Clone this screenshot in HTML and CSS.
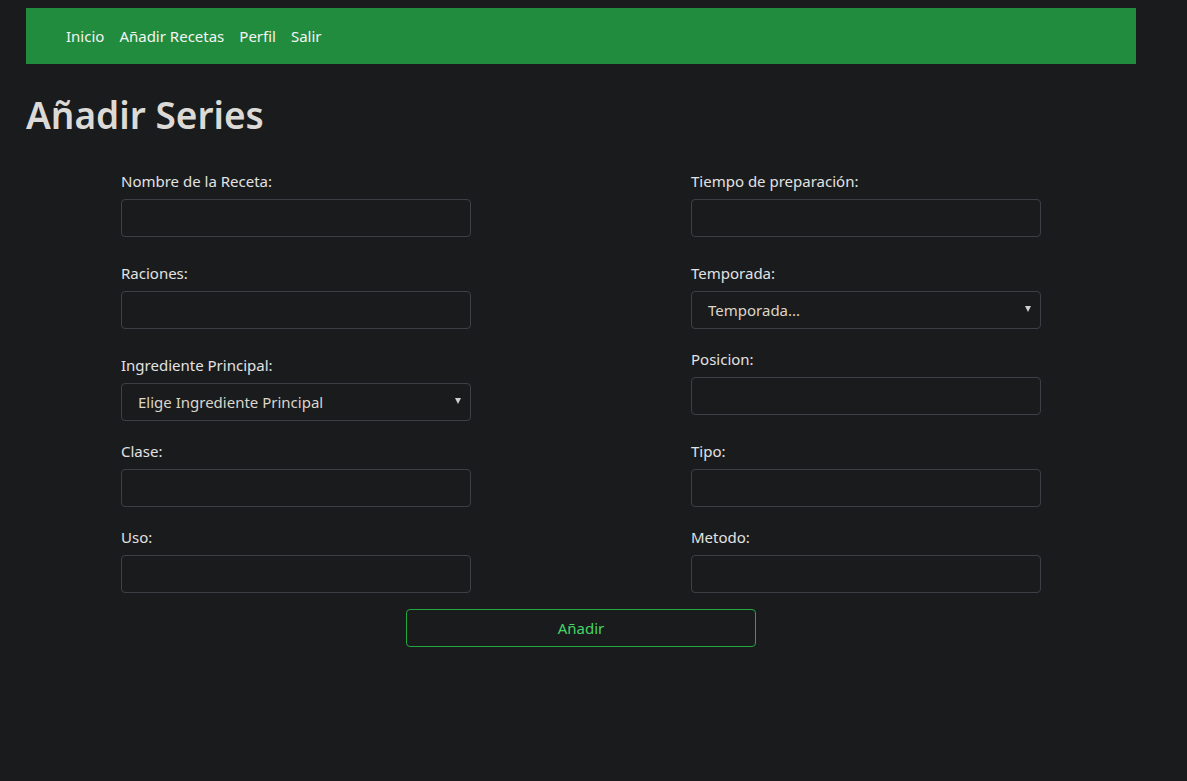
FILE: index.html
```html
<!DOCTYPE html>
<html lang="es">
<head>
<meta charset="utf-8">
<title>Añadir Series</title>
<link rel="stylesheet" href="styles.css">
</head>
<body>
<div class="container">
  <nav class="navbar">
    <a href="#" class="nav-link">Inicio</a>
    <a href="#" class="nav-link">Añadir Recetas</a>
    <a href="#" class="nav-link">Perfil</a>
    <a href="#" class="nav-link">Salir</a>
  </nav>
  <h1 class="title">Añadir Series</h1>
  <form class="form">
    <div class="cols">
      <div class="col">
        <div class="group gap-lg">
          <label class="label">Nombre de la Receta:</label>
          <input class="input" type="text">
        </div>
        <div class="group gap-lg">
          <label class="label">Raciones:</label>
          <input class="input" type="text">
        </div>
        <div class="group gap-sm">
          <label class="label">Ingrediente Principal:</label>
          <div class="select"><span>Elige Ingrediente Principal</span><span class="arrow"></span></div>
        </div>
        <div class="group gap-sm">
          <label class="label">Clase:</label>
          <input class="input" type="text">
        </div>
        <div class="group">
          <label class="label">Uso:</label>
          <input class="input" type="text">
        </div>
      </div>
      <div class="col">
        <div class="group gap-lg">
          <label class="label">Tiempo de preparación:</label>
          <input class="input" type="text">
        </div>
        <div class="group gap-sm">
          <label class="label">Temporada:</label>
          <div class="select"><span>Temporada...</span><span class="arrow"></span></div>
        </div>
        <div class="group gap-lg">
          <label class="label">Posicion:</label>
          <input class="input" type="text">
        </div>
        <div class="group gap-sm">
          <label class="label">Tipo:</label>
          <input class="input" type="text">
        </div>
        <div class="group">
          <label class="label">Metodo:</label>
          <input class="input" type="text">
        </div>
      </div>
    </div>
    <div class="actions">
      <button type="button" class="btn">Añadir</button>
    </div>
  </form>
</div>
</body>
</html>
```
FILE: styles.css
```css
html, body {
  margin: 0;
  padding: 0;
  background: #1a1b1d;
}
body {
  font-family: "Noto Sans", "Open Sans", sans-serif;
  font-size: 15px;
  color: #dedede;
  padding-top: 8px;
}
.container {
  width: 1110px;
  margin-left: 26px;
}
.navbar {
  background: #228c3e;
  height: 56px;
  display: flex;
  align-items: center;
  padding-left: 40px;
  gap: 15px;
}
.nav-link {
  color: #f4f4f4;
  text-decoration: none;
  font-size: 15px;
  line-height: 24px;
}
.title {
  margin: 27px 0 0 0;
  font-size: 37px;
  font-weight: 600;
  line-height: 48px;
  color: #dcdad6;
}
.form {
  margin-top: 30px;
}
.cols {
  display: grid;
  grid-template-columns: 350px 350px;
  column-gap: 220px;
  justify-content: center;
}
.col {
  display: flex;
  flex-direction: column;
}
.group {
  display: flex;
  flex-direction: column;
}
.gap-lg { margin-bottom: 24px; }
.gap-sm { margin-bottom: 18px; }
.label {
  font-size: 15px;
  line-height: 24px;
  margin-bottom: 6px;
  color: #e2e2e2;
}
.input {
  box-sizing: border-box;
  height: 38px;
  width: 350px;
  background: #1a1b1d;
  border: 1px solid #3b4046;
  border-radius: 4px;
  color: #ddd;
  font: inherit;
  padding: 0 12px;
  margin: 0;
}
.select {
  box-sizing: border-box;
  height: 38px;
  width: 350px;
  background: #1a1b1d;
  border: 1px solid #3b4046;
  border-radius: 4px;
  color: #dcd6c8;
  display: flex;
  align-items: center;
  justify-content: space-between;
  padding: 0 9px 0 16px;
  font-size: 15px;
}
.arrow {
  width: 0;
  height: 0;
  border-left: 3px solid transparent;
  border-right: 3px solid transparent;
  border-top: 6px solid #cfcfcf;
  margin-top: -3px;
}
.actions {
  display: flex;
  justify-content: center;
  margin-top: 16px;
}
.btn {
  box-sizing: border-box;
  width: 350px;
  height: 38px;
  background: transparent;
  border: 1px solid #22a63e;
  border-radius: 4px;
  color: #45d467;
  font: inherit;
  font-size: 15px;
  cursor: pointer;
}
```
